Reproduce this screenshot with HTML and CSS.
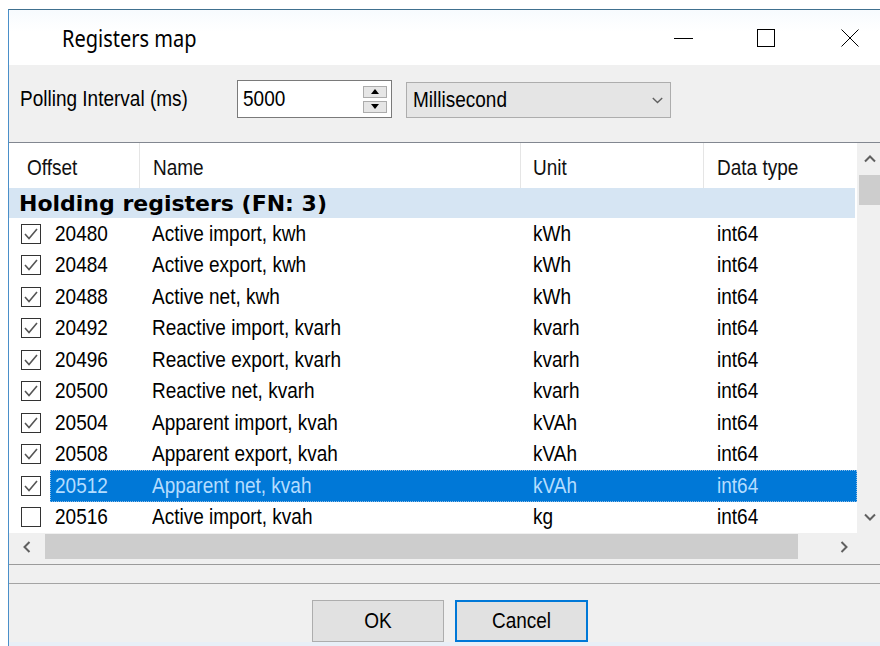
FILE: index.html
```html
<!DOCTYPE html>
<html lang="en">
<head>
<meta charset="utf-8">
<title>Registers map</title>
<link rel="stylesheet" href="styles.css">
</head>
<body>
<div class="window">
  <div class="titlebar">
    <span class="title">Registers map</span>
    <div class="captions">
      <svg class="cap cap-min" width="19" height="18" viewBox="0 0 19 18"><line x1="0" y1="9.5" x2="19" y2="9.5"/></svg>
      <svg class="cap cap-max" width="18" height="18" viewBox="0 0 18 18"><rect x="0.5" y="0.5" width="17" height="17"/></svg>
      <svg class="cap cap-close" width="18" height="18" viewBox="0 0 18 18"><line x1="0.5" y1="0.5" x2="17.5" y2="17.5"/><line x1="17.5" y1="0.5" x2="0.5" y2="17.5"/></svg>
    </div>
  </div>

  <div class="toolbar">
    <span class="poll-label"><span class="txt">Polling Interval (ms)</span></span>
    <div class="spin">
      <span class="txt">5000</span>
      <div class="spin-btns">
        <span class="spin-btn"><svg width="8" height="5" viewBox="0 0 8 5"><polygon points="0,5 4,0 8,5"/></svg></span>
        <span class="spin-btn"><svg width="8" height="5" viewBox="0 0 8 5"><polygon points="0,0 8,0 4,5"/></svg></span>
      </div>
    </div>
    <div class="combo">
      <span class="txt">Millisecond</span>
      <svg class="combo-arrow" width="11" height="7" viewBox="0 0 11 7"><polyline points="0.8,1 5.5,5.5 10.2,1"/></svg>
    </div>
  </div>

  <div class="list">
    <div class="list-main">
      <div class="table">
        <div class="header">
          <div class="hcell h-off"><span class="txt">Offset</span></div>
          <div class="hcell h-name"><span class="txt">Name</span></div>
          <div class="hcell h-unit"><span class="txt">Unit</span></div>
          <div class="hcell h-type"><span class="txt">Data type</span></div>
        </div>
        <div class="group">Holding registers (FN: 3)</div>

        <div class="row">
          <div class="chk-cell"><svg class="chk" width="20" height="20" viewBox="0 0 20 20"><rect x="0.5" y="0.5" width="19" height="19"/><polyline points="4,10 8,14.5 16,5"/></svg></div>
          <div class="cells"><span class="c-off">20480</span><span class="c-name">Active import, kwh</span><span class="c-unit">kWh</span><span class="c-type">int64</span></div>
        </div>
        <div class="row">
          <div class="chk-cell"><svg class="chk" width="20" height="20" viewBox="0 0 20 20"><rect x="0.5" y="0.5" width="19" height="19"/><polyline points="4,10 8,14.5 16,5"/></svg></div>
          <div class="cells"><span class="c-off">20484</span><span class="c-name">Active export, kwh</span><span class="c-unit">kWh</span><span class="c-type">int64</span></div>
        </div>
        <div class="row">
          <div class="chk-cell"><svg class="chk" width="20" height="20" viewBox="0 0 20 20"><rect x="0.5" y="0.5" width="19" height="19"/><polyline points="4,10 8,14.5 16,5"/></svg></div>
          <div class="cells"><span class="c-off">20488</span><span class="c-name">Active net, kwh</span><span class="c-unit">kWh</span><span class="c-type">int64</span></div>
        </div>
        <div class="row">
          <div class="chk-cell"><svg class="chk" width="20" height="20" viewBox="0 0 20 20"><rect x="0.5" y="0.5" width="19" height="19"/><polyline points="4,10 8,14.5 16,5"/></svg></div>
          <div class="cells"><span class="c-off">20492</span><span class="c-name">Reactive import, kvarh</span><span class="c-unit">kvarh</span><span class="c-type">int64</span></div>
        </div>
        <div class="row">
          <div class="chk-cell"><svg class="chk" width="20" height="20" viewBox="0 0 20 20"><rect x="0.5" y="0.5" width="19" height="19"/><polyline points="4,10 8,14.5 16,5"/></svg></div>
          <div class="cells"><span class="c-off">20496</span><span class="c-name">Reactive export, kvarh</span><span class="c-unit">kvarh</span><span class="c-type">int64</span></div>
        </div>
        <div class="row">
          <div class="chk-cell"><svg class="chk" width="20" height="20" viewBox="0 0 20 20"><rect x="0.5" y="0.5" width="19" height="19"/><polyline points="4,10 8,14.5 16,5"/></svg></div>
          <div class="cells"><span class="c-off">20500</span><span class="c-name">Reactive net, kvarh</span><span class="c-unit">kvarh</span><span class="c-type">int64</span></div>
        </div>
        <div class="row">
          <div class="chk-cell"><svg class="chk" width="20" height="20" viewBox="0 0 20 20"><rect x="0.5" y="0.5" width="19" height="19"/><polyline points="4,10 8,14.5 16,5"/></svg></div>
          <div class="cells"><span class="c-off">20504</span><span class="c-name">Apparent import, kvah</span><span class="c-unit">kVAh</span><span class="c-type">int64</span></div>
        </div>
        <div class="row">
          <div class="chk-cell"><svg class="chk" width="20" height="20" viewBox="0 0 20 20"><rect x="0.5" y="0.5" width="19" height="19"/><polyline points="4,10 8,14.5 16,5"/></svg></div>
          <div class="cells"><span class="c-off">20508</span><span class="c-name">Apparent export, kvah</span><span class="c-unit">kVAh</span><span class="c-type">int64</span></div>
        </div>
        <div class="row">
          <div class="chk-cell"><svg class="chk" width="20" height="20" viewBox="0 0 20 20"><rect x="0.5" y="0.5" width="19" height="19"/><polyline points="4,10 8,14.5 16,5"/></svg></div>
          <div class="cells selected"><span class="c-off">20512</span><span class="c-name">Apparent net, kvah</span><span class="c-unit">kVAh</span><span class="c-type">int64</span></div>
        </div>
        <div class="row">
          <div class="chk-cell"><svg class="chk" width="20" height="20" viewBox="0 0 20 20"><rect x="0.5" y="0.5" width="19" height="19"/></svg></div>
          <div class="cells"><span class="c-off">20516</span><span class="c-name">Active import, kvah</span><span class="c-unit">kg</span><span class="c-type">int64</span></div>
        </div>
      </div>

      <div class="vscroll">
        <div class="vs-btn vs-up"><svg width="12" height="8" viewBox="0 0 12 8"><polyline points="1,6.5 6,1.5 11,6.5"/></svg></div>
        <div class="vs-thumb"></div>
        <div class="vs-track"></div>
        <div class="vs-btn vs-down"><svg width="12" height="8" viewBox="0 0 12 8"><polyline points="1,1.5 6,6.5 11,1.5"/></svg></div>
      </div>
    </div>

    <div class="hscroll">
      <div class="hs-btn hs-left"><svg width="8" height="12" viewBox="0 0 8 12"><polyline points="6.5,1 1.5,6 6.5,11"/></svg></div>
      <div class="hs-thumb"></div>
      <div class="hs-track"></div>
      <div class="hs-btn hs-right"><svg width="8" height="12" viewBox="0 0 8 12"><polyline points="1.5,1 6.5,6 1.5,11"/></svg></div>
      <div class="hs-corner"></div>
    </div>
  </div>

  <div class="list-edge"></div>

  <div class="footer">
    <button class="btn btn-ok"><span class="txt">OK</span></button>
    <button class="btn btn-cancel"><span class="txt">Cancel</span></button>
  </div>
</div>
</body>
</html>
```

FILE: styles.css
```css
* {
  box-sizing: border-box;
}

html,
body {
  margin: 0;
  padding: 0;
}

body {
  width: 880px;
  height: 646px;
  overflow: hidden;
  background: #ffffff;
  font-family: "Liberation Sans", Arial, sans-serif;
  font-size: 19px;
  color: #000000;
}

/* the dialog font is drawn a little taller than it is wide */
.txt,
.c-off,
.c-name,
.c-unit,
.c-type {
  display: inline-block;
  transform: scaleY(1.18);
}

/* dialog frame */
.window {
  margin: 9px 0 0 8px;
  width: 876px;
  height: 637px;
  border-left: 1px solid #4a8fc9;
  border-top: 1px solid #40708f;
  background: #f0f0f0;
  display: flex;
  flex-direction: column;
}

/* caption bar */
.titlebar {
  height: 55px;
  flex: none;
  display: flex;
  align-items: center;
  background: linear-gradient(#f7fbfe, #ffffff 40%);
}

.title {
  display: inline-block;
  padding-left: 53px;
  font-family: "Noto Sans", "Open Sans", sans-serif;
  font-size: 20px;
  color: #000;
  transform: scaleY(1.22);
}

.captions {
  margin-left: auto;
  padding-right: 25px;
  display: flex;
  align-items: center;
}

.cap {
  display: block;
  fill: none;
  stroke: #000;
  stroke-width: 1;
}

.cap-min {
  margin-right: 64px;
}

.cap-max {
  margin-right: 66px;
}

/* polling interval controls */
.toolbar {
  height: 77px;
  flex: none;
  display: flex;
  align-items: flex-start;
  padding: 15px 0 0 11px;
}

.poll-label {
  width: 217px;
  flex: none;
  line-height: 38px;
}

.spin {
  width: 155px;
  height: 38px;
  flex: none;
  display: flex;
  align-items: center;
  padding-left: 5px;
  border: 1px solid #7a7a7a;
  background: #ffffff;
}

.spin-btns {
  margin-left: auto;
  margin-right: 4px;
  display: flex;
  flex-direction: column;
  gap: 3px;
}

.spin-btn {
  width: 24px;
  height: 12px;
  display: flex;
  align-items: center;
  justify-content: center;
  border: 1px solid #acacac;
  background: #e6e6e6;
}

.spin-btn svg {
  display: block;
  fill: #000;
}

.combo {
  margin: 2px 0 0 14px;
  width: 265px;
  height: 36px;
  flex: none;
  display: flex;
  align-items: center;
  padding: 0 7px 0 6px;
  border: 1px solid #adadad;
  background: #e5e5e5;
}

.combo-arrow {
  margin-left: auto;
  display: block;
  fill: none;
  stroke: #606060;
  stroke-width: 1.4;
}

/* register list */
.list {
  flex: none;
  border-top: 1px solid #828790;
  background: #ffffff;
}

.list-main {
  display: flex;
  height: 390px;
}

.table {
  width: 848px;
  flex: none;
}

.header {
  display: flex;
  height: 45px;
  background: #ffffff;
}

.hcell {
  display: flex;
  align-items: center;
  padding-top: 5px;
  border-right: 1px solid #e5e5e5;
  color: #111;
}

.h-off {
  width: 131px;
  padding-left: 18px;
}

.h-name {
  width: 381px;
  padding-left: 13px;
}

.h-unit {
  width: 183px;
  padding-left: 12px;
}

.h-type {
  width: 153px;
  padding-left: 13px;
  border-right: none;
}

.group {
  height: 30px;
  margin-right: 2px;
  display: flex;
  align-items: center;
  padding-left: 10px;
  background: #d6e5f3;
  font-family: "DejaVu Sans", Verdana, sans-serif;
  font-weight: bold;
  font-size: 22px;
  color: #000;
}

.row {
  display: flex;
  height: 31.5px;
  align-items: center;
}

.chk-cell {
  width: 41px;
  flex: none;
  padding-left: 12px;
  display: flex;
  align-items: center;
}

.chk {
  display: block;
}

.chk rect {
  fill: #fff;
  stroke: #333;
  stroke-width: 1;
}

.chk polyline {
  fill: none;
  stroke: #555;
  stroke-width: 1.6;
}

.cells {
  flex: 1;
  height: 100%;
  display: flex;
  align-items: center;
  white-space: nowrap;
}

.cells.selected {
  background: #0078d7;
  color: #b4ddff;
  outline: 1px dotted #8cbbe6;
  outline-offset: -1px;
}

.c-off {
  width: 90px;
  padding-left: 5px;
}

.c-name {
  width: 381px;
  padding-left: 12px;
}

.c-unit {
  width: 183px;
  padding-left: 12px;
}

.c-type {
  width: 153px;
  padding-left: 13px;
}

/* scroll bars */
.vscroll {
  width: 26px;
  flex: none;
  display: flex;
  flex-direction: column;
  background: #f0f0f0;
}

.vs-btn {
  display: flex;
  align-items: center;
  justify-content: center;
}

.vs-up {
  height: 32px;
}

.vs-down {
  height: 33px;
}

.vs-btn svg,
.hs-btn svg {
  display: block;
  fill: none;
  stroke: #606060;
  stroke-width: 2;
}

.vs-thumb {
  height: 30px;
  margin-left: 2px;
  background: #cdcdcd;
}

.vs-track {
  flex: 1;
}

.hscroll {
  height: 27px;
  display: flex;
  background: #f0f0f0;
}

.hs-btn {
  display: flex;
  align-items: center;
  justify-content: center;
}

.hs-left {
  width: 36px;
}

.hs-right {
  width: 26px;
}

.hs-thumb {
  width: 753px;
  margin: 1px 0;
  background: #cdcdcd;
}

.hs-track {
  width: 33px;
}

.hs-corner {
  width: 26px;
  background: #f0f0f0;
}

.list-edge {
  height: 20px;
  flex: none;
  margin-top: 4px;
  border-top: 1px solid #9b9b9b;
  border-bottom: 1px solid #a4a4a4;
}

/* button strip */
.footer {
  flex: 1;
  display: flex;
  align-items: flex-start;
  padding: 16px 0 0 303px;
  background: linear-gradient(#f0f0f0 58px, #e8eff7 58px);
}

.btn {
  height: 42px;
  margin: 0;
  padding: 0;
  font-family: "Liberation Sans", Arial, sans-serif;
  font-size: 19px;
  color: #000;
  background: #e1e1e1;
  border: 1px solid #adadad;
  border-radius: 0;
}

.btn-ok {
  width: 132px;
}

.btn-cancel {
  width: 133px;
  margin-left: 11px;
  border: 2px solid #0078d7;
}
```
